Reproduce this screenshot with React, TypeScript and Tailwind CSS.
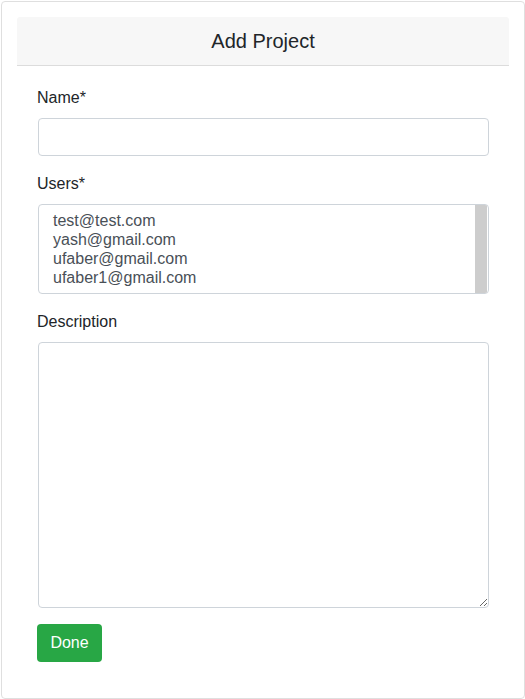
import React from "react";

export default function App() {
  const users = ["test@test.com", "yash@gmail.com", "ufaber@gmail.com", "ufaber1@gmail.com"];
  return (
    <div className="bg-white w-[525px] h-[699px] overflow-hidden" style={{ fontFamily: '"Liberation Sans", Arial, sans-serif' }}>
      <div className="mt-px ml-px w-[524px] h-[698px] border border-[#dfdfdf] rounded-[4px] p-[15px]">
        <div className="h-[49px] bg-[#f7f7f7] border-b border-[#dcdcdc] rounded-t-[3px] flex items-center justify-center text-[20px] text-[#212529]">
          Add Project
        </div>
        <div className="px-5 pt-5 flex flex-col text-[#212529]">
          <label className="text-[16px] leading-6 mb-2">Name*</label>
          <input
            type="text"
            className="ml-px w-[451px] h-[38px] border border-[#ced4da] rounded-[4px] px-3 text-[16px] text-[#495057] outline-none"
          />
          <label className="text-[16px] leading-6 mb-2 mt-4">Users*</label>
          <div className="ml-px w-[451px] h-[90px] border border-[#ced4da] rounded-[4px] flex overflow-hidden">
            <div className="flex-1 pl-[14px] pt-[6px] text-[16px] leading-[19px] text-[#495057]">
              {users.map((u) => (
                <div key={u}>{u}</div>
              ))}
            </div>
            <div className="w-[12px] h-full bg-[#cdcdcd] mr-px" />
          </div>
          <label className="text-[16px] leading-6 mb-2 mt-4">Description</label>
          <textarea className="ml-px w-[451px] h-[266px] border border-[#ced4da] rounded-[4px] px-3 py-1.5 text-[16px] text-[#495057] outline-none block" />
          <div className="mt-4">
            <button className="h-[38px] w-[65px] bg-[#28a745] text-white text-[16px] rounded-[4px]">Done</button>
          </div>
        </div>
      </div>
    </div>
  );
}
